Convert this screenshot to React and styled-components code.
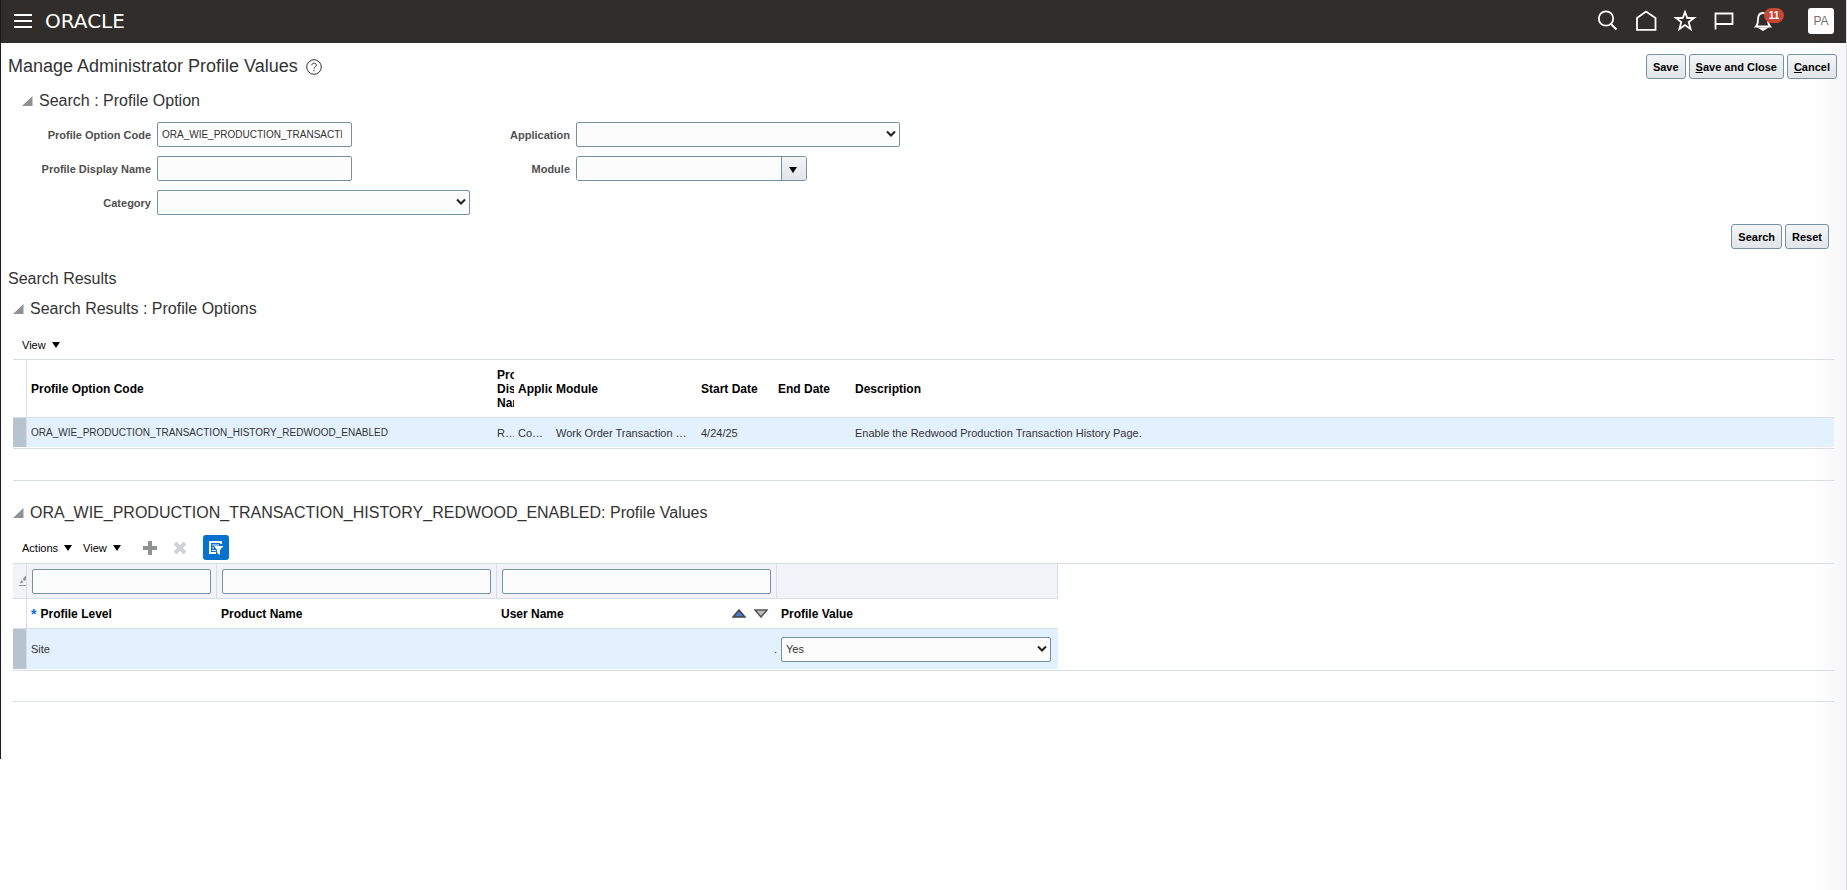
import React, { useState } from 'react';
import styled, { createGlobalStyle } from 'styled-components';

const GlobalStyle = createGlobalStyle`
  * {
    box-sizing: border-box;
  }

  body {
    margin: 0;
    background: #fff;
    color: #333;
    font-family: "Liberation Sans", Arial, sans-serif;
    font-size: 11px;
  }

  button, input, select {
    font: inherit;
    color: inherit;
  }
`;

const Page = styled.div`
  display: flex;
  flex-direction: column;
  min-height: 100vh;
  border-right: 1px solid #dcdce0;
  background: linear-gradient(to left, #f6f6f8, #fff 32px);
`;

const Shell = styled.div`
  border-left: 1px solid #1d1a18;
  padding-bottom: 57px;
`;

const TopBar = styled.header`
  display: flex;
  align-items: center;
  justify-content: space-between;
  height: 43px;
  padding: 0 12px 2px;
  background: #312d2a;
  color: #fff;
`;

const Brand = styled.div`
  display: flex;
  align-items: center;
  gap: 12px;
`;

const Logo = styled.a`
  color: #fff;
  font-family: "DejaVu Sans", sans-serif;
  font-size: 20px;
  line-height: 24px;
  text-decoration: none;
`;

const TopIcons = styled.nav`
  display: flex;
  align-items: center;
  gap: 15px;
`;

const IconButton = styled.button`
  position: relative;
  display: flex;
  align-items: center;
  justify-content: center;
  padding: 0;
  border: none;
  background: transparent;
  cursor: pointer;

  svg {
    display: block;
  }
`;

const Badge = styled.span`
  position: absolute;
  top: -1px;
  left: 13px;
  width: 20px;
  border-radius: 8px;
  background: #c74634;
  color: #fff;
  font-size: 10px;
  font-weight: bold;
  line-height: 15px;
  text-align: center;
`;

const Avatar = styled.button`
  width: 26px;
  height: 26px;
  margin-left: 18px;
  padding: 0;
  border: none;
  border-radius: 3px;
  background: #fff;
  color: #77726e;
  font-size: 12px;
  cursor: pointer;
`;

const TitleRow = styled.div`
  display: flex;
  align-items: center;
  justify-content: space-between;
  padding: 11px 9px 0 7px;
`;

const Title = styled.h1`
  display: flex;
  align-items: center;
  gap: 8px;
  margin: 0;
  font-size: 18px;
  font-weight: normal;
  line-height: 23px;
`;

const ButtonRow = styled.div`
  display: flex;
  justify-content: flex-end;
  gap: 3px;
`;

const Button = styled.button`
  height: 25px;
  padding: 0 6px;
  border: 1px solid #7691a3;
  border-radius: 3px;
  background: linear-gradient(#f3f5f6, #e1e5e9);
  color: #000;
  font-weight: bold;
  cursor: pointer;
`;

const SectionTitle = styled.h2`
  display: flex;
  align-items: center;
  gap: 6px;
  margin: 0;
  font-size: 16px;
  font-weight: normal;
  line-height: 20px;
`;

const SearchPanel = styled.section`
  padding: 12px 17px 0 21px;
`;

const FieldColumns = styled.div`
  display: flex;
  gap: 36px;
  padding: 11px 0 9px;
`;

const Fields = styled.div`
  display: grid;
  grid-template-columns: ${(props) => props.$label}px auto;
  grid-auto-rows: 25px;
  align-items: center;
  gap: 9px 6px;
`;

const Label = styled.label`
  color: #4f4f4f;
  font-weight: bold;
  text-align: right;
`;

const TextBox = styled.input`
  display: block;
  width: ${(props) => props.$width || '100%'};
  height: 25px;
  padding: 0 5px;
  border: 1px solid #7691a3;
  border-radius: 2px;
  background: #fcfcfc;
`;

const CodeBox = styled(TextBox)`
  padding: 0 9px 0 4px;
  font-size: 10px;
`;

const SelectWrap = styled.div`
  position: relative;
  width: ${(props) => props.$width || '100%'};

  svg {
    position: absolute;
    top: 8px;
    right: 4px;
    pointer-events: none;
  }
`;

const SelectBox = styled.select`
  display: block;
  width: 100%;
  height: 25px;
  padding: 0 20px 0 4px;
  border: 1px solid #7691a3;
  border-radius: 2px;
  background: #fcfcfc;
  appearance: none;
`;

const Combo = styled.div`
  display: flex;
  width: 231px;
  height: 25px;
  border: 1px solid #7691a3;
  border-radius: 3px;
  overflow: hidden;
`;

const ComboInput = styled.input`
  flex: 1;
  min-width: 0;
  padding: 0 5px;
  border: none;
  background: #fcfcfc;
`;

const ComboButton = styled.button`
  display: flex;
  align-items: center;
  justify-content: center;
  width: 25px;
  padding: 3px 2px 0 0;
  border: none;
  border-left: 1px solid #7691a3;
  background: linear-gradient(#f3f5f6, #e1e5e9);
`;

const Results = styled.section`
  padding: 20px 12px 0 12px;
`;

const ResultsHeading = styled.h2`
  margin: 0 0 10px -5px;
  font-size: 16px;
  font-weight: normal;
  line-height: 20px;
`;

const Toolbar = styled.div`
  display: flex;
  align-items: center;
  height: ${(props) => props.$height}px;
  margin-top: ${(props) => props.$top}px;
  padding-left: 9px;
`;

const MenuButton = styled.button`
  display: flex;
  align-items: center;
  gap: 6px;
  margin-right: 11px;
  padding: 0;
  border: none;
  background: transparent;
  color: #000;
  cursor: pointer;
`;

const ToolGroup = styled.div`
  display: flex;
  align-items: center;
  gap: 16px;
  margin-left: 11px;
`;

const FilterButton = styled(IconButton)`
  width: 26px;
  height: 25px;
  border-radius: 3px;
  background: #0572ce;
`;

const TableFrame = styled.div`
  border-top: 1px solid #d6dfe6;
  border-bottom: 1px solid #d6dfe6;
  padding-bottom: ${(props) => props.$space}px;
`;

const TableBody = styled.div`
  padding-bottom: 1px;
  border-bottom: 1px solid #d6dfe6;
`;

const Table = styled.table`
  width: ${(props) => props.$width || '100%'};
  border-collapse: separate;
  border-spacing: 0;
  table-layout: fixed;
`;

const Th = styled.th`
  height: ${(props) => props.$height}px;
  padding: 0 0 0 4px;
  border-bottom: 1px solid #d6dfe6;
  overflow: hidden;
  color: #000;
  font-size: 12px;
  line-height: 14px;
  text-align: left;
`;

const Td = styled.td`
  height: ${(props) => props.$height}px;
  padding: 0 0 0 4px;
  background: #e3f1ff;
  overflow: hidden;
  text-overflow: ellipsis;
  white-space: nowrap;
  text-align: ${(props) => props.$align || 'left'};
`;

const CodeTd = styled(Td)`
  font-size: 10px;
`;

const Gutter = styled.td`
  padding: 0;
  border-right: 1px solid #d6dfe6;
  border-bottom: ${(props) => (props.$selected ? 'none' : '1px solid #d6dfe6')};
  background: ${(props) => (props.$selected ? '#b7c3cf' : 'transparent')};
`;

const FilterCell = styled.td`
  height: 35px;
  padding: 0 5px;
  border-right: 1px solid #d6dfe6;
  border-bottom: 1px solid #d6dfe6;
  background: #f2f3f8;
  overflow: hidden;
`;

const HeaderLine = styled.div`
  display: flex;
  align-items: center;
  gap: 4px;
`;

const Required = styled.span`
  align-self: flex-start;
  color: #0572ce;
  font-size: 14px;
  line-height: 14px;
`;

const SortHeader = styled.div`
  display: flex;
  align-items: center;
  justify-content: space-between;
  padding-right: 9px;
`;

const SortButtons = styled.span`
  display: flex;
  gap: 8px;
`;

const ValuesSection = styled.section`
  padding: 22px 12px 0 12px;
`;

const Disclosure = () => (
  <svg width="11" height="10" viewBox="0 0 11 10" aria-hidden="true">
    <path d="M10.5 0V10H0z" fill="#8f9194" />
  </svg>
);

const Caret = () => (
  <svg width="8" height="6" viewBox="0 0 8 6" aria-hidden="true">
    <path d="M0 0H8L4 6z" fill="#000" />
  </svg>
);

const Chevron = () => (
  <svg width="10" height="8" viewBox="0 0 10 8" fill="none" aria-hidden="true">
    <path d="M1 1.5L5 5.5L9 1.5" stroke="#222" strokeWidth="2" />
  </svg>
);

const topIcons = [
  {
    name: 'Search',
    draw: (
      <>
        <circle cx="11" cy="9.5" r="7.2" />
        <path d="M16 15L21.500 20.5" strokeWidth="2" />
      </>
    ),
  },
  { name: 'Home', draw: <path d="M3 20.8V9L12 2.500L21.500 9V20.8z" /> },
  {
    name: 'Favorites',
    draw: <path d="M12 3L14.3 9H21L15.7 13L17.6 20L12 16L6.4 20L8.3 13L3 9H9.7z" />,
  },
  { name: 'Watchlist', draw: <path d="M3.5 20.5V4.500H20.500V15H3.5" /> },
];

function Dropdown({ id, label, width, options = [''] }) {
  return (
    <SelectWrap $width={width}>
      <SelectBox id={id} aria-label={label}>
        {options.map((option) => (
          <option key={option}>{option}</option>
        ))}
      </SelectBox>
      <Chevron />
    </SelectWrap>
  );
}

function Menu({ children }) {
  return (
    <MenuButton type="button">
      {children}
      <Caret />
    </MenuButton>
  );
}

function Header() {
  return (
    <TopBar>
      <Brand>
        <IconButton type="button" aria-label="Navigator">
          <svg width="20" height="16" viewBox="0 0 20 16" stroke="#fff" strokeWidth="2">
            <path d="M1 2H19M1 8H19M1 14H19" />
          </svg>
        </IconButton>
        <Logo href="#">ORACLE</Logo>
      </Brand>
      <TopIcons>
        {topIcons.map(({ name, draw }) => (
          <IconButton type="button" key={name} aria-label={name}>
            <svg width="24" height="24" viewBox="0 0 24 24" fill="none" stroke="#fff" strokeWidth="1.8">
              {draw}
            </svg>
          </IconButton>
        ))}
        <IconButton type="button" aria-label="Notifications">
          <svg width="24" height="24" viewBox="0 0 24 24" fill="none" stroke="#fff" strokeWidth="1.8">
            <path d="M5 17.5C7 15.5 7 14 7 10.5C7 6.5 9 4 12 4C15 4 17 6.5 17 10.5C17 14 17 15.5 19 17.5z" />
            <path d="M9.500 19.500H14.500L12 21z" fill="#fff" />
          </svg>
          <Badge>11</Badge>
        </IconButton>
        <Avatar type="button">PA</Avatar>
      </TopIcons>
    </TopBar>
  );
}

function SearchForm() {
  const [code, setCode] = useState('ORA_WIE_PRODUCTION_TRANSACTION_HISTORY_REDWOOD_ENABLED');

  return (
    <SearchPanel>
      <SectionTitle>
        <Disclosure />
        Search : Profile Option
      </SectionTitle>
      <FieldColumns>
        <Fields $label={129}>
          <Label htmlFor="code">Profile Option Code</Label>
          <CodeBox id="code" $width="195px" value={code} onChange={(e) => setCode(e.target.value)} />
          <Label htmlFor="displayName">Profile Display Name</Label>
          <TextBox id="displayName" $width="195px" />
          <Label htmlFor="category">Category</Label>
          <Dropdown id="category" width="313px" />
        </Fields>
        <Fields $label={64}>
          <Label htmlFor="application">Application</Label>
          <Dropdown id="application" width="324px" />
          <Label htmlFor="module">Module</Label>
          <Combo>
            <ComboInput id="module" />
            <ComboButton type="button" aria-label="Open module list">
              <Caret />
            </ComboButton>
          </Combo>
        </Fields>
      </FieldColumns>
      <ButtonRow>
        <Button type="button">Search</Button>
        <Button type="button">Reset</Button>
      </ButtonRow>
    </SearchPanel>
  );
}

function ProfileOptions() {
  return (
    <Results>
      <ResultsHeading>Search Results</ResultsHeading>
      <SectionTitle>
        <Disclosure />
        Search Results : Profile Options
      </SectionTitle>
      <Toolbar $top={11} $height={29}>
        <Menu>View</Menu>
      </Toolbar>
      <TableFrame $space={31}>
        <TableBody>
          <Table>
            <colgroup>
              <col width="14" />
              <col width="466" />
              <col width="21" />
              <col width="38" />
              <col width="145" />
              <col width="77" />
              <col width="77" />
              <col />
            </colgroup>
            <thead>
              <tr>
                <Gutter />
                <Th $height={58}>Profile Option Code</Th>
                <Th>Profile Display Name</Th>
                <Th>Application</Th>
                <Th>Module</Th>
                <Th>Start Date</Th>
                <Th>End Date</Th>
                <Th>Description</Th>
              </tr>
            </thead>
            <tbody>
              <tr>
                <Gutter $selected />
                <CodeTd $height={29}>ORA_WIE_PRODUCTION_TRANSACTION_HISTORY_REDWOOD_ENABLED</CodeTd>
                <Td>R…</Td>
                <Td>Co…</Td>
                <Td>Work Order Transaction …</Td>
                <Td>4/24/25</Td>
                <Td />
                <Td>Enable the Redwood Production Transaction History Page.</Td>
              </tr>
            </tbody>
          </Table>
        </TableBody>
      </TableFrame>
    </Results>
  );
}

function ProfileValues() {
  return (
    <ValuesSection>
      <SectionTitle>
        <Disclosure />
        ORA_WIE_PRODUCTION_TRANSACTION_HISTORY_REDWOOD_ENABLED: Profile Values
      </SectionTitle>
      <Toolbar $top={9} $height={31}>
        <Menu>Actions</Menu>
        <Menu>View</Menu>
        <ToolGroup>
          <IconButton type="button" aria-label="Add">
            <svg width="14" height="14" viewBox="0 0 14 14" stroke="#8f9194" strokeWidth="4">
              <path d="M7 0V14M0 7H14" />
            </svg>
          </IconButton>
          <IconButton type="button" aria-label="Delete">
            <svg width="14" height="14" viewBox="0 0 14 14" stroke="#d0d2d4" strokeWidth="4">
              <path d="M2 2L12 12M12 2L2 12" />
            </svg>
          </IconButton>
          <FilterButton type="button" aria-label="Query by Example">
            <svg width="16" height="16" viewBox="0 0 16 16" fill="none">
              <path d="M13 4V2H2V13H8" stroke="#fff" strokeWidth="2" />
              <path d="M4 5H11M4 8H6M4 10.5H8" stroke="#fff" />
              <path d="M6 6H15.5L12 10V15L9 13V10z" fill="#fff" />
            </svg>
          </FilterButton>
        </ToolGroup>
      </Toolbar>
      <TableFrame $space={30}>
        <TableBody>
          <Table $width="1045px">
            <colgroup>
              <col width="14" />
              <col width="190" />
              <col width="280" />
              <col width="280" />
              <col width="281" />
            </colgroup>
            <thead>
              <tr>
                <FilterCell>
                  <svg width="14" height="12" viewBox="0 0 14 12" aria-hidden="true">
                    <path d="M2 9L3.5 6L5.5 8L3 9.5zM4.5 5L9 0.5L11 2.5L6.5 7z" fill="#8f9194" />
                    <path d="M1 11.5H14" stroke="#8f9194" />
                  </svg>
                </FilterCell>
                <FilterCell>
                  <TextBox aria-label="Filter Profile Level" />
                </FilterCell>
                <FilterCell>
                  <TextBox aria-label="Filter Product Name" />
                </FilterCell>
                <FilterCell>
                  <TextBox aria-label="Filter User Name" />
                </FilterCell>
                <FilterCell />
              </tr>
              <tr>
                <Gutter />
                <Th $height={30}>
                  <HeaderLine>
                    <Required>*</Required>
                    Profile Level
                  </HeaderLine>
                </Th>
                <Th>Product Name</Th>
                <Th>
                  <SortHeader>
                    User Name
                    <SortButtons>
                      <IconButton type="button" aria-label="Sort ascending">
                        <svg width="14" height="9" viewBox="0 0 14 9">
                          <path d="M7 1L13 8H1z" fill="#4a7ac8" stroke="#444" strokeWidth="1.5" />
                        </svg>
                      </IconButton>
                      <IconButton type="button" aria-label="Sort descending">
                        <svg width="14" height="9" viewBox="0 0 14 9">
                          <path d="M1 1H13L7 8z" fill="#b9bbbd" stroke="#555" strokeWidth="1.5" />
                        </svg>
                      </IconButton>
                    </SortButtons>
                  </SortHeader>
                </Th>
                <Th>Profile Value</Th>
              </tr>
            </thead>
            <tbody>
              <tr>
                <Gutter $selected />
                <Td $height={40}>Site</Td>
                <Td />
                <Td $align="right">.</Td>
                <Td>
                  <Dropdown label="Profile Value" width="270px" options={['Yes', 'No']} />
                </Td>
              </tr>
            </tbody>
          </Table>
        </TableBody>
      </TableFrame>
    </ValuesSection>
  );
}

export default function App() {
  return (
    <Page>
      <GlobalStyle />
      <Shell>
        <Header />
        <TitleRow>
          <Title>
            Manage Administrator Profile Values
            <IconButton type="button" aria-label="Help">
              <svg width="16" height="16" viewBox="0 0 16 16" fill="none" stroke="#333">
                <circle cx="8" cy="8" r="7.3" />
                <path d="M5.8 6.3C5.8 3.5 10.3 3.5 10.3 6.2C10.3 7.8 8 7.8 8 9.8M8 11V12.3" />
              </svg>
            </IconButton>
          </Title>
          <ButtonRow>
            <Button type="button">Save</Button>
            <Button type="button">
              <u>S</u>ave and Close
            </Button>
            <Button type="button">
              <u>C</u>ancel
            </Button>
          </ButtonRow>
        </TitleRow>
        <SearchForm />
        <ProfileOptions />
        <ProfileValues />
      </Shell>
    </Page>
  );
}
